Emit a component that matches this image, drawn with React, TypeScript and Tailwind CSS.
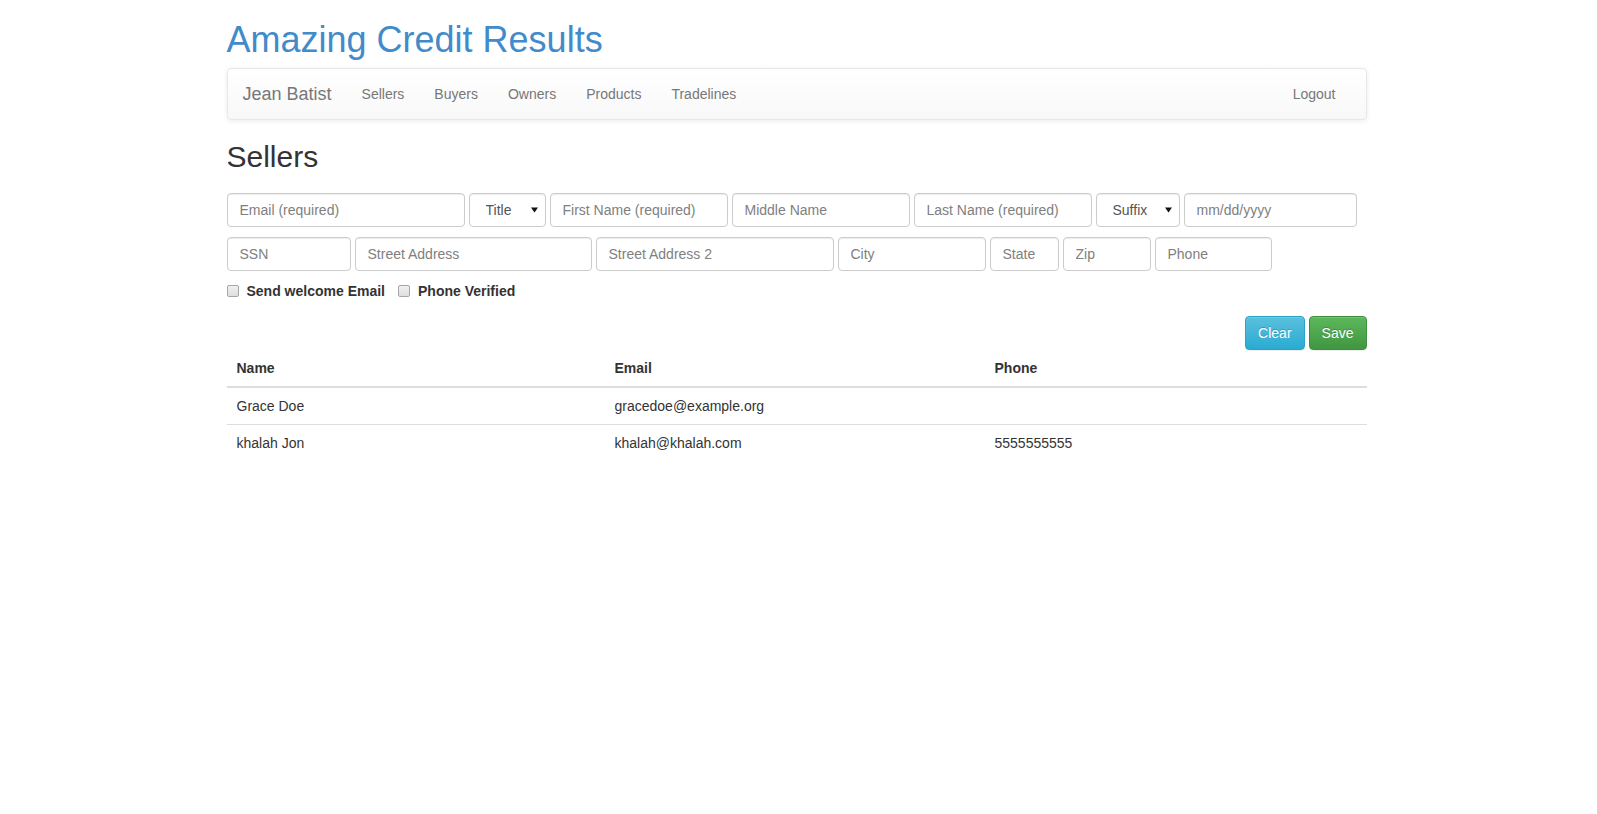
import React from 'react';

const inputCls =
  'h-[34px] px-3 border border-[#ccc] rounded-[4px] bg-white text-sm text-[#555] shadow-[inset_0_1px_1px_rgba(0,0,0,0.075)] placeholder:text-[#808080] focus:outline-none';

const checkCls =
  'appearance-none w-[12px] h-[12px] m-0 mr-[8px] rounded-[2px] border border-[#a6a6a6] bg-[linear-gradient(to_bottom,#f0f0f0,#dedede)]';

const SelectBox: React.FC<{ label: string; width: string }> = ({ label, width }) => (
  <div className={`relative ${width}`}>
    <select
      className={`${inputCls} w-full appearance-none pl-4 pr-6 text-[#555] cursor-pointer`}
      defaultValue=""
    >
      <option value="">{label}</option>
    </select>
    <svg
      className="absolute right-[8px] top-1/2 -translate-y-1/2 pointer-events-none"
      width="7"
      height="6"
      viewBox="0 0 7 6"
    >
      <path d="M0 0.5 L7 0.5 L3.5 5.5 Z" fill="#111" />
    </svg>
  </div>
);

const navLinks = ['Sellers', 'Buyers', 'Owners', 'Products', 'Tradelines'];

const sellers = [
  { name: 'Grace Doe', email: 'gracedoe@example.org', phone: '' },
  { name: 'khalah Jon', email: 'khalah@khalah.com', phone: '5555555555' },
];

export default function App() {
  return (
    <div className="min-h-screen bg-white font-['Liberation_Sans',Arial,sans-serif] text-sm text-[#333]">
      <div className="w-[1140px] ml-[calc(50%-572px)]">
        <h1 className="mt-5 mb-2 text-[36px] leading-[1.1] text-[#428bca]">Amazing Credit Results</h1>

        <nav className="h-[52px] flex items-center border border-[#e7e7e7] rounded-[4px] bg-[linear-gradient(to_bottom,#fff_0,#f8f8f8_100%)] shadow-[inset_0_1px_0_rgba(255,255,255,0.15),0_1px_5px_rgba(0,0,0,0.075)]">
          <a className="px-[15px] text-[18px] leading-5 text-[#777]">Jean Batist</a>
          <ul className="flex">
            {navLinks.map((l) => (
              <li key={l}>
                <a className="block px-[15px] py-[15px] leading-5 text-[#777]">{l}</a>
              </li>
            ))}
          </ul>
          <a className="ml-auto mr-[15px] px-[15px] py-[15px] leading-5 text-[#777]">Logout</a>
        </nav>

        <h2 className="mt-5 mb-5 text-[30px] leading-[1.1] text-[#333]">Sellers</h2>

        <form onSubmit={(e) => e.preventDefault()}>
          <div className="flex gap-1">
            <input className={`${inputCls} w-[238px]`} placeholder="Email (required)" />
            <SelectBox label="Title" width="w-[77px]" />
            <input className={`${inputCls} w-[178px]`} placeholder="First Name (required)" />
            <input className={`${inputCls} w-[178px]`} placeholder="Middle Name" />
            <input className={`${inputCls} w-[178px]`} placeholder="Last Name (required)" />
            <SelectBox label="Suffix" width="w-[84px]" />
            <input className={`${inputCls} w-[173px] placeholder:text-[#555]`} placeholder="mm/dd/yyyy" />
          </div>

          <div className="flex gap-1 mt-[10px]">
            <input className={`${inputCls} w-[124px]`} placeholder="SSN" />
            <input className={`${inputCls} w-[237px]`} placeholder="Street Address" />
            <input className={`${inputCls} w-[238px]`} placeholder="Street Address 2" />
            <input className={`${inputCls} w-[148px]`} placeholder="City" />
            <input className={`${inputCls} w-[69px]`} placeholder="State" />
            <input className={`${inputCls} w-[88px]`} placeholder="Zip" />
            <input className={`${inputCls} w-[117px]`} placeholder="Phone" />
          </div>

          <div className="flex items-center h-5 mt-[10px] font-bold">
            <label className="flex items-center">
              <input type="checkbox" className={checkCls} />
              Send welcome Email
            </label>
            <label className="flex items-center ml-[13px]">
              <input type="checkbox" className={checkCls} />
              Phone Verified
            </label>
          </div>

          <div className="flex justify-end gap-1 mt-[15px]">
            <button
              type="button"
              className="h-[34px] px-3 rounded-[4px] border border-[#28a4c9] bg-[linear-gradient(to_bottom,#5bc0de_0,#2aabd2_100%)] text-white [text-shadow:0_-1px_0_rgba(0,0,0,0.2)] shadow-[inset_0_1px_0_rgba(255,255,255,0.15),0_1px_1px_rgba(0,0,0,0.075)]"
            >
              Clear
            </button>
            <button
              type="submit"
              className="h-[34px] px-3 rounded-[4px] border border-[#3e8f3e] bg-[linear-gradient(to_bottom,#5cb85c_0,#419641_100%)] text-white [text-shadow:0_-1px_0_rgba(0,0,0,0.2)] shadow-[inset_0_1px_0_rgba(255,255,255,0.15),0_1px_1px_rgba(0,0,0,0.075)]"
            >
              Save
            </button>
          </div>
        </form>

        <table className="w-full table-fixed border-collapse">
          <thead>
            <tr>
              <th className="py-2 pl-[10px] pr-2 text-left font-bold leading-5 border-b-2 border-[#ddd]">Name</th>
              <th className="p-2 text-left font-bold leading-5 border-b-2 border-[#ddd]">Email</th>
              <th className="p-2 text-left font-bold leading-5 border-b-2 border-[#ddd]">Phone</th>
            </tr>
          </thead>
          <tbody>
            {sellers.map((s, i) => (
              <tr key={s.email} className={i > 0 ? 'border-t border-[#ddd]' : ''}>
                <td className="py-2 pl-[10px] pr-2 leading-5">{s.name}</td>
                <td className="p-2 leading-5">{s.email}</td>
                <td className="p-2 leading-5">{s.phone}</td>
              </tr>
            ))}
          </tbody>
        </table>
      </div>
    </div>
  );
}
